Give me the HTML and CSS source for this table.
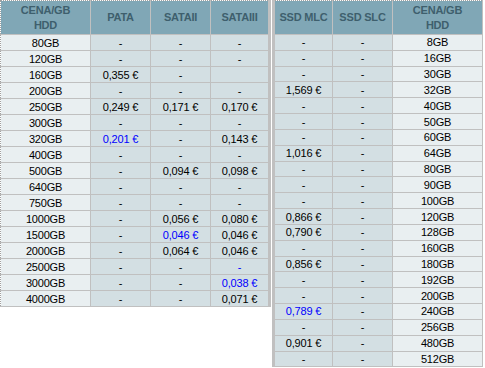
FILE: index.html
```html
<!DOCTYPE html>
<html>
<head>
<meta charset="utf-8">
<link rel="stylesheet" href="styles.css">
</head>
<body>
<div class="wrap">
<table class="tbl left">
<thead>
<tr><th class="c-size">CENA/GB<br>HDD</th><th class="c-pata">PATA</th><th class="c-s2">SATAII</th><th class="c-s3">SATAIII</th></tr>
</thead>
<tbody>
<tr><td class="size">80GB</td><td>-</td><td>-</td><td>-</td></tr>
<tr><td class="size">120GB</td><td>-</td><td>-</td><td>-</td></tr>
<tr><td class="size">160GB</td><td>0,355 €</td><td>-</td><td></td></tr>
<tr><td class="size">200GB</td><td>-</td><td>-</td><td>-</td></tr>
<tr><td class="size">250GB</td><td>0,249 €</td><td>0,171 €</td><td>0,170 €</td></tr>
<tr><td class="size">300GB</td><td>-</td><td>-</td><td>-</td></tr>
<tr><td class="size">320GB</td><td class="best">0,201 €</td><td>-</td><td>0,143 €</td></tr>
<tr><td class="size">400GB</td><td>-</td><td>-</td><td>-</td></tr>
<tr><td class="size">500GB</td><td>-</td><td>0,094 €</td><td>0,098 €</td></tr>
<tr><td class="size">640GB</td><td>-</td><td>-</td><td>-</td></tr>
<tr><td class="size">750GB</td><td>-</td><td>-</td><td>-</td></tr>
<tr><td class="size">1000GB</td><td>-</td><td>0,056 €</td><td>0,080 €</td></tr>
<tr><td class="size">1500GB</td><td>-</td><td class="best">0,046 €</td><td>0,046 €</td></tr>
<tr><td class="size">2000GB</td><td>-</td><td>0,064 €</td><td>0,046 €</td></tr>
<tr><td class="size">2500GB</td><td>-</td><td>-</td><td class="best">-</td></tr>
<tr><td class="size">3000GB</td><td>-</td><td>-</td><td class="best">0,038 €</td></tr>
<tr><td class="size">4000GB</td><td>-</td><td>-</td><td>0,071 €</td></tr>
</tbody>
</table>
<table class="tbl right">
<thead>
<tr><th class="c-mlc">SSD MLC</th><th class="c-slc">SSD SLC</th><th class="c-size2">CENA/GB<br>HDD</th></tr>
</thead>
<tbody>
<tr><td>-</td><td>-</td><td class="size">8GB</td></tr>
<tr><td>-</td><td>-</td><td class="size">16GB</td></tr>
<tr><td>-</td><td>-</td><td class="size">30GB</td></tr>
<tr><td>1,569 €</td><td>-</td><td class="size">32GB</td></tr>
<tr><td>-</td><td>-</td><td class="size">40GB</td></tr>
<tr><td>-</td><td>-</td><td class="size">50GB</td></tr>
<tr><td>-</td><td>-</td><td class="size">60GB</td></tr>
<tr><td>1,016 €</td><td>-</td><td class="size">64GB</td></tr>
<tr><td>-</td><td>-</td><td class="size">80GB</td></tr>
<tr><td>-</td><td>-</td><td class="size">90GB</td></tr>
<tr><td>-</td><td>-</td><td class="size">100GB</td></tr>
<tr><td>0,866 €</td><td>-</td><td class="size">120GB</td></tr>
<tr><td>0,790 €</td><td>-</td><td class="size">128GB</td></tr>
<tr><td>-</td><td>-</td><td class="size">160GB</td></tr>
<tr><td>0,856 €</td><td>-</td><td class="size">180GB</td></tr>
<tr><td>-</td><td>-</td><td class="size">192GB</td></tr>
<tr><td>-</td><td>-</td><td class="size">200GB</td></tr>
<tr><td class="best">0,789 €</td><td>-</td><td class="size">240GB</td></tr>
<tr><td>-</td><td>-</td><td class="size">256GB</td></tr>
<tr><td>0,901 €</td><td>-</td><td class="size">480GB</td></tr>
<tr><td>-</td><td>-</td><td class="size">512GB</td></tr>
</tbody>
</table>
</div>
</body>
</html>
```
FILE: styles.css
```css
html, body {
  margin: 0;
  padding: 0;
  background: #ffffff;
}
.wrap {
  display: flex;
  align-items: flex-start;
  font-family: "Liberation Sans", Arial, sans-serif;
  font-size: 11px;
  letter-spacing: -0.2px;
  color: #000;
}
.tbl {
  border-collapse: collapse;
  table-layout: fixed;
  border-top: 1px dotted #a0a0a0;
}
.left {
  border-left: 1px dotted #a0a0a0;
  border-right: 3px solid #c0c0c0;
}
.right {
  border-left: 3px solid #c0c0c0;
  border-right: 1px solid #c0c0c0;
  border-bottom: 1px solid #c0c0c0;
  margin-left: 1px;
}
.tbl th {
  background: #80a7b6;
  color: #3e5f6d;
  font-weight: bold;
  height: 33px;
  padding: 0;
  line-height: 15px;
  border-left: 1px solid #c0c0c0;
  border-bottom: 1px solid #c0c0c0;
  text-align: center;
  vertical-align: middle;
}
.tbl td {
  background: #d3dfe3;
  height: 15px;
  padding: 0;
  line-height: 14px;
  text-align: center;
  border: 1px solid #c0c0c0;
  white-space: nowrap;
}
.right td {
  height: 14.84px;
}
.tbl td.size {
  background: #e9eff1;
}
.tbl td.best {
  color: #0000ff;
}
.c-size { width: 89px; }
.c-pata { width: 59px; }
.c-s2 { width: 59px; }
.c-s3 { width: 57px; }
.c-mlc { width: 57px; }
.c-slc { width: 59px; }
.c-size2 { width: 89px; }
.left th:first-child, .left td:first-child { border-left: 0; }
.right th:first-child, .right td:first-child { border-left: 0; }
```
